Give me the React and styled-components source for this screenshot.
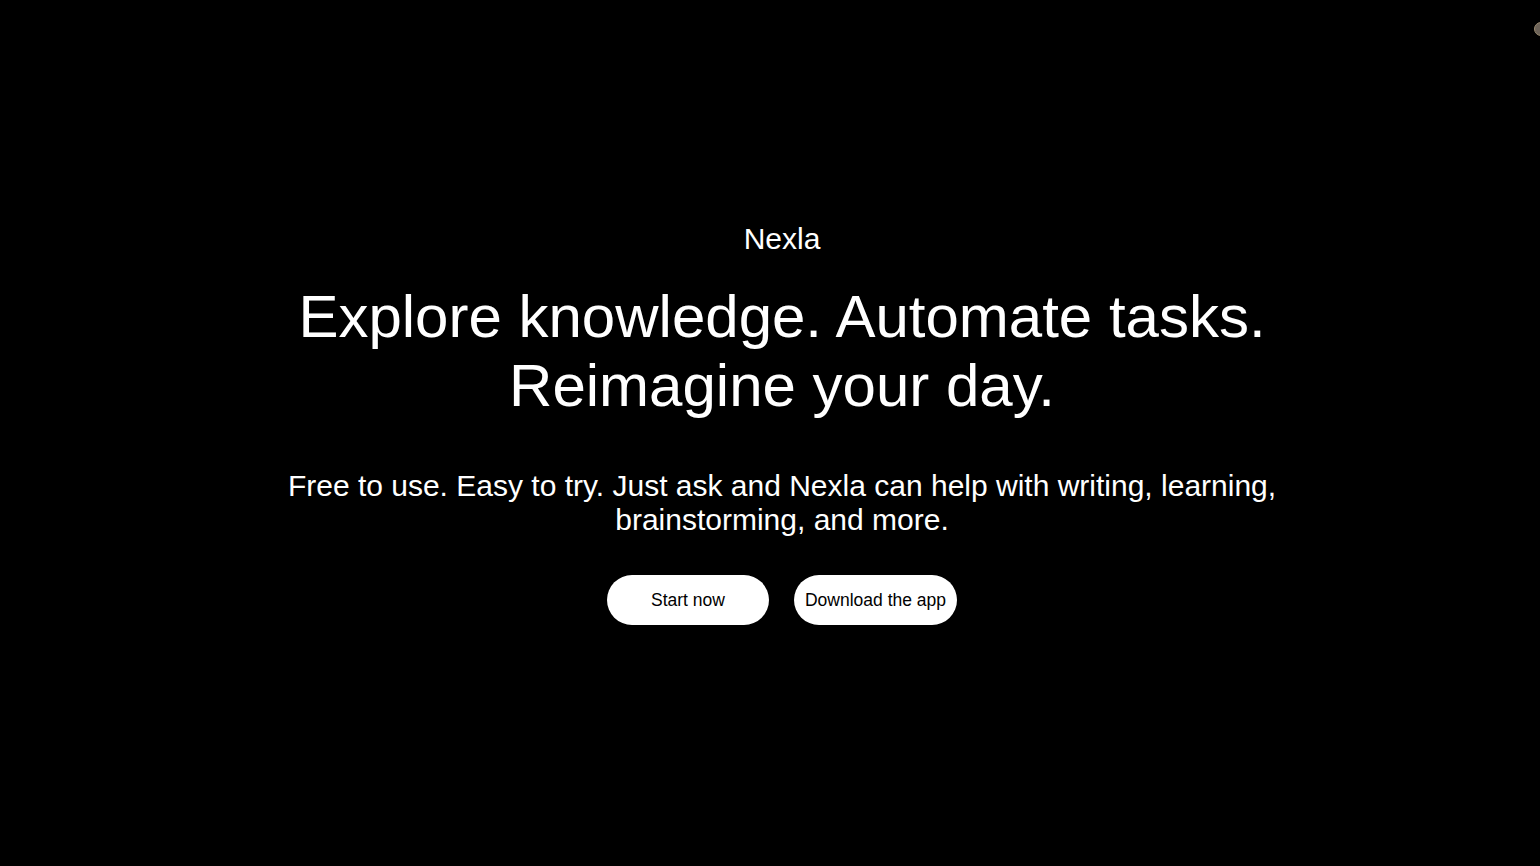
import React from "react";
import styled, { createGlobalStyle } from "styled-components";

const Global = createGlobalStyle`
  html, body { margin: 0; padding: 0; background: #000; }
  body { font-family: "Liberation Sans", Arial, sans-serif; color: #fff; overflow: hidden; }
`;

const Page = styled.main`
  position: relative;
  height: 866px;
  display: flex;
  flex-direction: column;
  align-items: center;
  justify-content: flex-start;
  padding: 221px 0 0 24px;
  box-sizing: border-box;
  overflow: hidden;
`;

const Avatar = styled.div`
  position: absolute;
  top: 22px;
  right: -8px;
  width: 12px;
  height: 12px;
  border-radius: 50%;
  background: #6b6258;
  border: 1px solid #9a8a70;
`;

const Brand = styled.div`
  font-size: 30px;
  line-height: 36px;
`;

const Headline = styled.h1`
  margin: 25px 0 0;
  font-size: 60px;
  font-weight: 400;
  line-height: 69px;
  text-align: center;
`;

const Sub = styled.p`
  margin: 49px 0 0;
  font-size: 30px;
  line-height: 34px;
  text-align: center;
  max-width: 1000px;
`;

const Actions = styled.div`
  margin-top: 38px;
  display: flex;
  gap: 25px;
`;

const Button = styled.button`
  height: 50px;
  min-width: 162px;
  padding: 0 11px;
  border: none;
  border-radius: 25px;
  background: #fff;
  color: #000;
  font-family: "Liberation Sans", Arial, sans-serif;
  font-size: 17.5px;
  cursor: pointer;
`;

export default function App() {
  return (
    <>
      <Global />
      <Page>
        <Avatar />
        <Brand>Nexla</Brand>
        <Headline>
          Explore knowledge. Automate tasks.
          <br />
          Reimagine your day.
        </Headline>
        <Sub>
          Free to use. Easy to try. Just ask and Nexla can help with writing, learning,
          brainstorming, and more.
        </Sub>
        <Actions>
          <Button>Start now</Button>
          <Button>Download the app</Button>
        </Actions>
      </Page>
    </>
  );
}
